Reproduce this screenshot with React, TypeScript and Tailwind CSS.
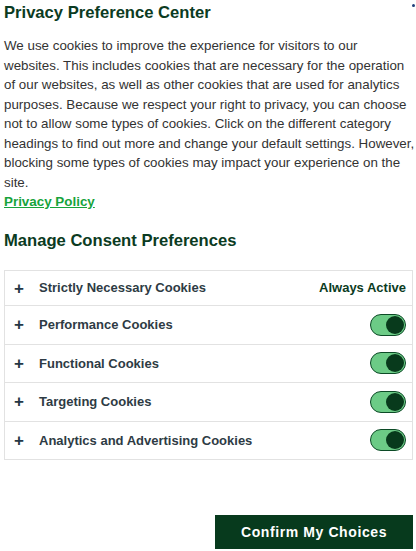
import React from "react";

const rows = [
  { name: "Strictly Necessary Cookies", always: true },
  { name: "Performance Cookies" },
  { name: "Functional Cookies" },
  { name: "Targeting Cookies" },
  { name: "Analytics and Advertising Cookies" },
];

function Toggle() {
  return (
    <div className="w-[36px] h-[22px] rounded-full bg-[#6ccb86] border border-[#0c4a26] flex items-center justify-end px-[1px]">
      <div className="w-[18px] h-[18px] rounded-full bg-[#083a1c]" />
    </div>
  );
}

export default function App() {
  return (
    <div
      className="relative w-[416px] h-[551px] bg-white overflow-hidden"
      style={{ fontFamily: '"Liberation Sans", Arial, sans-serif' }}
    >
      <div className="absolute right-[1px] top-[4px] w-[3px] h-[3px] bg-[#1f3f7a] rounded-sm" />
      <div className="px-[4px] pt-[2px]">
        <h1 className="text-[16.6px] leading-[22px] font-bold text-[#0b3b22]">Privacy Preference Center</h1>
        <p className="mt-[12px] mr-[-4px] text-[13.35px] leading-[19.5px] text-[#333333]">
          We use cookies to improve the experience for visitors to our websites. This includes cookies that are necessary for the operation of our websites, as well as other cookies that are used for analytics purposes. Because we respect your right to privacy, you can choose not to allow some types of cookies. Click on the different category headings to find out more and change your default settings. However, blocking some types of cookies may impact your experience on the site.
        </p>
        <a className="block text-[13.4px] leading-[19px] font-bold text-[#17a33b] underline">Privacy Policy</a>
        <h2 className="mt-[19px] text-[16.6px] leading-[22px] font-bold text-[#0b3b22]">Manage Consent Preferences</h2>
        <div className="mt-[18px] border border-[#e2e2e2] mr-[-1px]">
          {rows.map((r, i) => (
            <div
              key={r.name}
              className={`flex items-center pl-[9px] pr-[6px] ${i === 0 ? "h-[34px]" : "h-[38.5px] border-t border-[#e2e2e2]"}`}
            >
              <span className="w-[25px] text-[17px] leading-none text-[#253746] font-bold">+</span>
              <span className="flex-1 text-[13px] font-bold text-[#2e3b44]">{r.name}</span>
              {r.always ? (
                <span className="text-[13px] font-bold text-[#0b3b22]">Always Active</span>
              ) : (
                <Toggle />
              )}
            </div>
          ))}
        </div>
        <div className="flex justify-end mt-[55px] mr-[-1px]">
          <button className="w-[198px] h-[34px] bg-[#073a1d] text-white text-[14px] font-bold tracking-[0.6px]">
            Confirm My Choices
          </button>
        </div>
      </div>
    </div>
  );
}
